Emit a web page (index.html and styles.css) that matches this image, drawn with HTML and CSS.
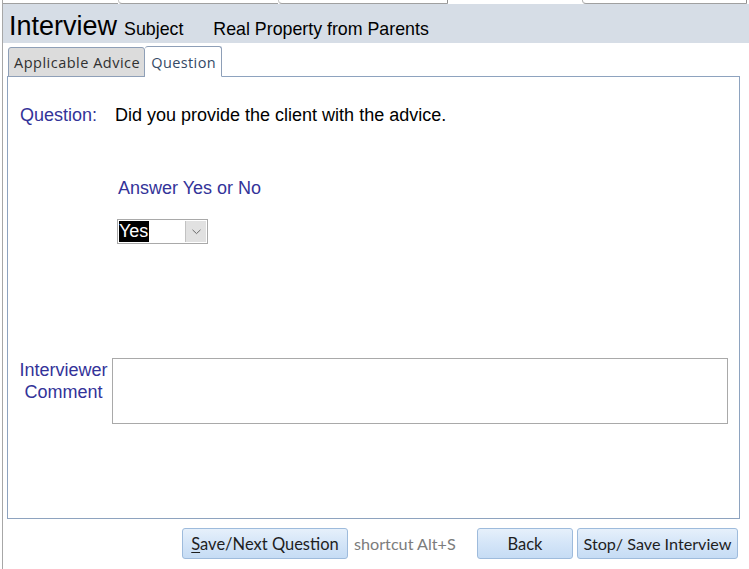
FILE: index.html
```html
<!DOCTYPE html>
<html>
<head>
<meta charset="utf-8">
<title>Interview</title>
<link rel="stylesheet" href="styles.css">
</head>
<body>
<div class="window">
  <div class="topstrip">
    <div class="ts ts-a"></div>
    <div class="ts ts-b"></div>
    <div class="ts ts-c"></div>
    <div class="ts ts-active"></div>
    <div class="ts ts-d"></div>
    <div class="ts ts-rest"></div>
  </div>
  <header class="titlebar">
    <span class="title">Interview</span>
    <span class="subject-label">Subject</span>
    <span class="subject">Real Property from Parents</span>
  </header>
  <div class="tabs">
    <div class="tab">Applicable Advice</div>
    <div class="tab tab-active">Question</div>
  </div>
  <section class="panel">
    <div class="qrow">
      <span class="label">Question:</span>
      <span class="qtext">Did you provide the client with the advice.</span>
    </div>
    <div class="answer">
      <div class="alabel">Answer Yes or No</div>
      <div class="select">
        <span class="sel-value"><span class="sel-hl">Yes</span></span>
        <span class="sel-btn">
          <svg width="9" height="6" viewBox="0 0 9 6"><path d="M0.5 0.8 L4.5 4.6 L8.5 0.8" fill="none" stroke="#6a6a6a" stroke-width="1"/></svg>
        </span>
      </div>
    </div>
    <div class="comment-row">
      <div class="clabel">Interviewer<br>Comment</div>
      <div class="textarea"></div>
    </div>
  </section>
  <footer class="actions">
    <button class="btn btn-save"><u>S</u>ave/Next Question</button>
    <span class="shortcut">shortcut Alt+S</span>
    <button class="btn btn-back">Back</button>
    <button class="btn btn-stop">Stop/ Save Interview</button>
  </footer>
</div>
</body>
</html>
```
FILE: styles.css
```css
html, body {
  margin: 0;
  padding: 0;
  background: #ffffff;
}

.window {
  margin-left: 2px;
  border-left: 1px solid #a7a7a7;
  height: 569px;
  box-sizing: border-box;
  font-family: "Liberation Sans", Arial, sans-serif;
  display: flex;
  flex-direction: column;
}

/* top strip (cut-off window tabs) */
.topstrip {
  display: flex;
  height: 4px;
}
.ts {
  box-sizing: border-box;
  height: 4px;
}
.ts-a {
  width: 115px;
  border-bottom: 1px solid #a0a0a0;
}
.ts-b {
  width: 160px;
  border-bottom: 1px solid #a0a0a0;
  border-left: 1px solid #c4c4c4;
  border-bottom-left-radius: 4px;
}
.ts-c {
  width: 170px;
  border-bottom: 1px solid #a0a0a0;
  border-left: 1px solid #c4c4c4;
  border-right: 1px solid #909090;
  border-bottom-left-radius: 4px;
}
.ts-active {
  width: 134px;
}
.ts-d {
  width: 165px;
  border-bottom: 1px solid #a0a0a0;
  border-left: 1px solid #b0b0b0;
  border-right: 1px solid #909090;
  border-bottom-left-radius: 5px;
}
.ts-rest {
  flex: 1;
}

/* header band */
.titlebar {
  height: 39px;
  box-sizing: border-box;
  background: #d6dde6;
  display: flex;
  align-items: baseline;
  padding: 9px 0 0 6px;
  color: #000;
}
.title {
  font-size: 27px;
  line-height: 27px;
}
.subject-label {
  font-size: 17.8px;
  margin-left: 7px;
}
.subject {
  font-size: 17.8px;
  margin-left: 30px;
}

/* tabs */
.tabs {
  display: flex;
  align-items: flex-end;
  margin: 3px 0 -1px 5px;
  position: relative;
  z-index: 1;
  height: 31px;
}
.tab {
  box-sizing: border-box;
  height: 30px;
  padding: 5px 4px 0 5px;
  font-family: "Open Sans", "Noto Sans", sans-serif;
  font-size: 14.5px;
  letter-spacing: 0.5px;
  color: #303030;
  background: #dcdcdc;
  border: 1px solid #8e9fb7;
  border-radius: 3px 3px 0 0;
}
.tab-active {
  height: 31px;
  padding: 6px 5px 0 6px;
  letter-spacing: 0.4px;
  background: #ffffff;
  border-bottom-color: #ffffff;
  border-left: none;
  color: #354a66;
}

/* main panel */
.panel {
  margin-left: 4px;
  width: 733px;
  height: 443px;
  box-sizing: border-box;
  border: 1px solid #8ea3bf;
  padding: 28px 0 0 12px;
  display: flex;
  flex-direction: column;
}
.qrow {
  display: grid;
  grid-template-columns: 95px 1fr;
  font-size: 18px;
  line-height: 21px;
}
.label {
  color: #333399;
}
.qtext {
  color: #000;
}

.answer {
  margin: 52px 0 0 97px;
}
.alabel {
  font-size: 18px;
  line-height: 21px;
  color: #333399;
  padding-left: 1px;
}
.select {
  margin-top: 20px;
  width: 91px;
  height: 25px;
  box-sizing: border-box;
  border: 1px solid #a9a9a9;
  display: flex;
  align-items: stretch;
  background: #fff;
}
.sel-value {
  flex: 1;
  padding: 1px 0 1px 1px;
  display: flex;
}
.sel-hl {
  background: #000;
  color: #fff;
  font-size: 18px;
  line-height: 21px;
  padding-right: 1px;
}
.sel-btn {
  width: 21px;
  box-sizing: border-box;
  background: #e1e1e1;
  border-left: 1px solid #c2c2c2;
  margin: 1px;
  display: flex;
  align-items: center;
  justify-content: center;
}

.comment-row {
  margin-top: 114px;
  display: grid;
  grid-template-columns: 97px 616px;
  margin-left: -5px;
}
.clabel {
  text-align: center;
  color: #333399;
  font-size: 18px;
  line-height: 22px;
  padding-top: 1px;
}
.textarea {
  height: 66px;
  box-sizing: border-box;
  border: 1px solid #a9a9a9;
  background: #fff;
}

/* footer buttons */
.actions {
  display: flex;
  align-items: center;
  margin-top: 9px;
  padding-left: 179px;
}
.btn {
  box-sizing: border-box;
  height: 31px;
  padding: 0;
  font-family: Lato, "Open Sans", sans-serif;
  font-size: 16.5px;
  color: #1e1e1e;
  background: linear-gradient(#e6f0fb, #d4e5f8 50%, #c6dcf4);
  border: 1px solid #9ebbdc;
  border-radius: 3px;
}
.btn u {
  text-decoration-thickness: 1px;
  text-underline-offset: 2px;
}
.btn-save {
  width: 166px;
}
.shortcut {
  font-family: Lato, "Open Sans", sans-serif;
  font-size: 16.2px;
  color: #7c7c7c;
  margin-left: 6px;
  width: 123px;
}
.btn-back {
  width: 96px;
}
.btn-stop {
  width: 161px;
  margin-left: 4px;
  font-size: 16.2px;
}
```
